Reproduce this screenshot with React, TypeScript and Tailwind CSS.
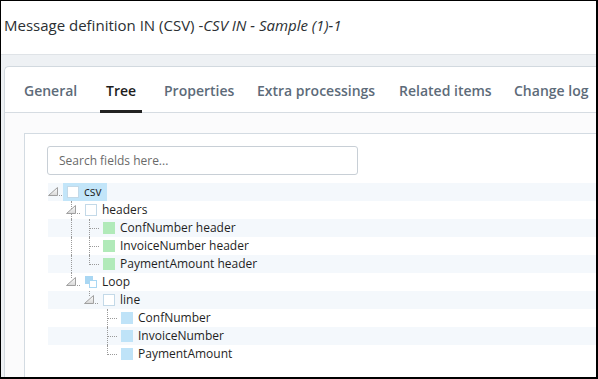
import React from "react";

type Row = {
  label: string;
  level: number;
  kind: "expand" | "leaf";
  icon: "check" | "green" | "blue" | "loop";
  guides: boolean[]; // for indent cells 0..level-1 : draw vertical line
  last: boolean;
  selected?: boolean;
};

const rows: Row[] = [
  { label: "csv", level: 0, kind: "expand", icon: "check", guides: [], last: true, selected: true },
  { label: "headers", level: 1, kind: "expand", icon: "check", guides: [false], last: false },
  { label: "ConfNumber header", level: 2, kind: "leaf", icon: "green", guides: [false, true], last: false },
  { label: "InvoiceNumber header", level: 2, kind: "leaf", icon: "green", guides: [false, true], last: false },
  { label: "PaymentAmount header", level: 2, kind: "leaf", icon: "green", guides: [false, true], last: true },
  { label: "Loop", level: 1, kind: "expand", icon: "loop", guides: [false], last: true },
  { label: "line", level: 2, kind: "expand", icon: "check", guides: [false, false], last: true },
  { label: "ConfNumber", level: 3, kind: "leaf", icon: "blue", guides: [false, false, false], last: false },
  { label: "InvoiceNumber", level: 3, kind: "leaf", icon: "blue", guides: [false, false, false], last: false },
  { label: "PaymentAmount", level: 3, kind: "leaf", icon: "blue", guides: [false, false, false], last: true },
];

function GuideCell({ on }: { on: boolean }) {
  return (
    <div className="relative w-[18px] h-full shrink-0">
      {on && <div className="absolute left-[5px] top-0 bottom-0 border-l border-dotted border-[#9a9a9a]" />}
    </div>
  );
}

function ExpandCell({ last, first }: { last: boolean; first: boolean }) {
  return (
    <div className="relative w-[15px] h-full shrink-0">
      {!first && (
        <div
          className={
            "absolute left-[5px] top-0 border-l border-dotted border-[#9a9a9a] " + (last ? "h-[5px]" : "bottom-0")
          }
        />
      )}
      <svg width="15" height="18" viewBox="0 0 15 18" className="absolute left-0 top-0">
        <defs>
          <linearGradient id="tg" x1="0" y1="0" x2="0" y2="1">
            <stop offset="0" stopColor="#ffffff" />
            <stop offset="1" stopColor="#d8d8d8" />
          </linearGradient>
        </defs>
        <polygon points="0.5,12.5 9.5,12.5 9.5,4.5" fill="url(#tg)" stroke="#a0a0a0" strokeWidth="1" />
        <line x1="11" y1="12.5" x2="15" y2="12.5" stroke="#9a9a9a" strokeWidth="1" strokeDasharray="1 1" />
      </svg>
    </div>
  );
}

function LeafCell({ last }: { last: boolean }) {
  return (
    <div className="relative w-[15px] h-full shrink-0">
      <div
        className={
          "absolute left-[5px] top-0 border-l border-dotted border-[#9a9a9a] " + (last ? "h-[10px]" : "bottom-0")
        }
      />
      <div className="absolute left-[6px] right-0 top-[9px] border-t border-dotted border-[#9a9a9a]" />
    </div>
  );
}

function NodeIcon({ icon }: { icon: Row["icon"] }) {
  if (icon === "check")
    return <div className="w-[12px] h-[12px] bg-white border border-[#c3d9e8] shrink-0" />;
  if (icon === "green") return <div className="w-[12px] h-[12px] bg-[#b1eab9] shrink-0" />;
  if (icon === "blue") return <div className="w-[12px] h-[12px] bg-[#bfe3f8] shrink-0" />;
  return (
    <svg width="12" height="12" viewBox="0 0 12 12" className="shrink-0">
      <rect x="0" y="0" width="8" height="8" fill="#a9d7f3" />
      <rect x="4.5" y="4.5" width="7" height="7" fill="#ffffff" stroke="#a9d7f3" strokeWidth="1" />
    </svg>
  );
}

function TreeRow({ row, idx }: { row: Row; idx: number }) {
  return (
    <div className={"flex h-[18px] items-stretch " + (idx % 2 === 0 ? "bg-[#f4f8fc]" : "bg-white")}>
      {row.guides.map((g, i) => (
        <GuideCell key={i} on={g} />
      ))}
      {row.kind === "expand" ? <ExpandCell last={row.last} first={row.level === 0} /> : <LeafCell last={row.last} />}
      <div className={"flex items-center gap-[5px] pl-[4px] pr-[6px] " + (row.selected ? "bg-[#c2e5f9]" : "")}>
        <NodeIcon icon={row.icon} />
        <span className="text-[12px] leading-[18px] text-[#1f1f1f] whitespace-nowrap">{row.label}</span>
      </div>
    </div>
  );
}

const tabs = [
  { label: "General", w: "w-[82px]" },
  { label: "Tree", w: "w-[58px]", active: true },
  { label: "Properties", w: "w-[93px]" },
  { label: "Extra processings", w: "w-[142px]" },
  { label: "Related items", w: "w-[115px]" },
  { label: "Change log", w: "w-[100px]" },
];

export default function App() {
  return (
    <div className="w-[598px] h-[379px] overflow-hidden bg-white border-black border-t border-l border-r-2 border-b-2 flex flex-col font-['Open_Sans',sans-serif]">
      <div className="h-[54px] shrink-0 pt-[13px] pl-[3px] border-b border-[#dfe3e7] text-[15px] leading-[22px] text-[#2b2f33] whitespace-nowrap">
        Message definition IN (CSV) -<span className="italic">CSV IN - Sample (1)-1</span>
      </div>
      <div className="flex-1 bg-[#eef1f4] pt-[11px] pl-[3px] flex flex-col min-h-0">
        <div className="flex-1 w-[620px] bg-white border-t border-l border-[#d2d9df] rounded-tl-[5px] flex flex-col min-h-0">
          <div className="h-[46px] shrink-0 border-b border-[#d6dce2] flex items-stretch pl-[13px]">
            {tabs.map((t) => (
              <div key={t.label} className={"shrink-0 flex items-stretch " + t.w}>
                <div
                  className={
                    "px-[6px] pt-[3px] flex items-center text-[14px] font-semibold whitespace-nowrap border-b-[3px] -mb-px " +
                    (t.active ? "border-[#222222] text-[#1d1d1d]" : "border-transparent text-[#5d6b79]")
                  }
                >
                  {t.label}
                </div>
              </div>
            ))}
          </div>
          <div className="flex-1 bg-[#fbfbfc] pt-[20px] pl-[19px] flex flex-col min-h-0">
            <div className="flex-1 bg-white border-t border-l border-[#d3dbe2] pt-[12px] pl-[22px]">
              <input
                className="w-[311px] h-[29px] border border-[#c8cfd6] rounded-[3px] px-[11px] text-[12px] outline-none placeholder:text-[#6a6a6a] bg-white"
                placeholder="Search fields here..."
              />
              <div className="mt-[8px] ml-[1px]">
                {rows.map((r, i) => (
                  <TreeRow key={i} row={r} idx={i} />
                ))}
              </div>
            </div>
          </div>
        </div>
      </div>
    </div>
  );
}
